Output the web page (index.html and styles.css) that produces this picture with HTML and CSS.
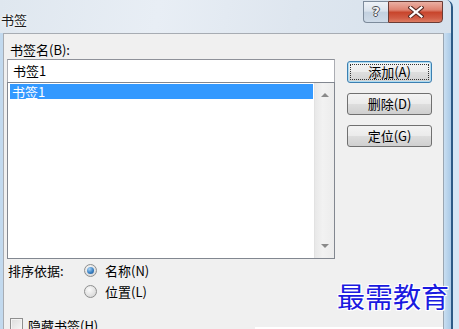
FILE: index.html
```html
<!DOCTYPE html>
<html lang="zh-CN">
<head>
<meta charset="utf-8">
<title>书签</title>
<link rel="stylesheet" href="styles.css">
</head>
<body>
<div class="window">
  <div class="titlebar">
    <span class="title">书签</span>
    <div class="caption-btns">
      <div class="cap help"><span class="qmark">?</span></div>
      <div class="cap close">
        <svg width="16" height="12" viewBox="0 0 16 12">
          <path d="M2.5 1.5 L13.5 10.5 M13.5 1.5 L2.5 10.5" stroke="#5a2b24" stroke-width="4.2" stroke-linecap="square"/>
          <path d="M2.5 1.5 L13.5 10.5 M13.5 1.5 L2.5 10.5" stroke="#ffffff" stroke-width="2.2" stroke-linecap="square"/>
        </svg>
      </div>
    </div>
  </div>
  <div class="frame">
    <div class="client">
      <div class="main">
        <div class="leftcol">
          <div class="label">书签名(B):</div>
          <div class="input">书签1</div>
          <div class="list">
            <div class="items">
              <div class="item sel">书签1</div>
            </div>
            <div class="vscroll">
              <div class="arrow up"></div>
              <div class="arrow down"></div>
            </div>
          </div>
        </div>
        <div class="btncol">
          <div class="btn default"><span class="focus">添加(A)</span></div>
          <div class="btn">删除(D)</div>
          <div class="btn">定位(G)</div>
        </div>
      </div>
      <div class="sort">
        <div class="sort-label">排序依据:</div>
        <div class="radios">
          <div class="radio-row"><span class="radio checked"></span><span>名称(N)</span></div>
          <div class="radio-row"><span class="radio"></span><span>位置(L)</span></div>
        </div>
      </div>
      <div class="check-row">
        <span class="checkbox"></span><span class="check-text">隐藏书签(H)</span>
        <div class="strip"></div>
      </div>
    </div>
    <div class="frame-right"></div>
  </div>
</div>
<div class="watermark">最需教育</div>
</body>
</html>
```
FILE: styles.css
```css
* { box-sizing: border-box; }
html, body { margin: 0; padding: 0; }
body {
  position: relative;
  width: 459px;
  height: 329px;
  overflow: hidden;
  background: #d6e6f4;
  font-family: "Noto Sans CJK SC", "Noto Sans", sans-serif;
  font-size: 13px;
  color: #000;
}
.window {
  width: 453px;
  height: 329px;
  border-right: 2px solid #2b5a86;
  border-top-right-radius: 7px;
  background: #c2d9ee;
  display: flex;
  flex-direction: column;
  overflow: hidden;
}
.titlebar {
  height: 33px;
  flex: none;
  display: flex;
  align-items: flex-start;
  padding-right: 8px;
  background: linear-gradient(100deg, #dfe7ef 0%, #e8eef5 35%, #dee6ef 65%, #d6e1ec 100%);
}
.title {
  padding-left: 1px;
  margin-top: 11px;
  line-height: 17px;
  font-size: 13px;
  color: #1b1b1b;
  text-shadow: 0 0 6px #fff, 0 0 3px #fff;
}
.caption-btns {
  margin-left: auto;
  margin-top: 1px;
  display: flex;
}
.cap {
  height: 22px;
  display: flex;
  align-items: center;
  justify-content: center;
}
.help {
  width: 25px;
  border: 1px solid #7d8b9b;
  border-right: none;
  border-bottom-left-radius: 4px;
  background: linear-gradient(#eef2f7 0%, #dae3ed 45%, #c3d1e0 52%, #cfdbe8 100%);
}
.qmark {
  font-family: "DejaVu Sans", sans-serif;
  font-weight: bold;
  font-size: 13px;
  line-height: 14px;
  color: #f4f4f4;
  text-shadow: 1px 0 0 #4b4f55, -1px 0 0 #4b4f55, 0 1px 0 #4b4f55, 0 -1px 0 #4b4f55;
}
.close {
  width: 55px;
  border: 1px solid #6a3b34;
  border-bottom-right-radius: 4px;
  background: linear-gradient(#eab0a4 0%, #de8270 40%, #c8452c 52%, #d15c45 80%, #dd7d63 100%);
}
.frame {
  flex: 1;
  display: flex;
  min-height: 0;
}
.client {
  margin-left: 3px;
  width: 441px;
  background: #f0f0f0;
  border-left: 1px solid #a7acb3;
  border-top: 1px solid #a7acb3;
  border-right: 1px solid #9aa6b2;
  padding: 7px 0 0 3px;
  display: flex;
  flex-direction: column;
}
.frame-right {
  flex: 1;
  background: linear-gradient(to right, #c9def1, #a9c9e6);
}
.main { display: flex; }
.leftcol { width: 328px; }
.label {
  height: 18px;
  line-height: 18px;
  padding-left: 3px;
}
.input {
  height: 23px;
  background: #fff;
  border: 1px solid #abadb3;
  border-top-color: #8e9199;
  border-bottom: none;
  padding-left: 5px;
  line-height: 21px;
}
.list {
  height: 177px;
  border: 1px solid #828790;
  background: #fff;
  display: flex;
}
.items {
  flex: 1;
  padding-top: 1px;
}
.item {
  height: 15px;
  line-height: 15px;
  margin: 0 1px 0 2px;
  padding-left: 2px;
}
.item.sel {
  background: #3399ff;
  color: #fff;
}
.vscroll {
  width: 20px;
  background: linear-gradient(to right, #e8e8e8, #f2f2f2 40%, #ececec);
  border-left: 1px solid #e2e2e2;
  display: flex;
  flex-direction: column;
  justify-content: space-between;
}
.arrow {
  height: 24px;
  display: flex;
  align-items: center;
  justify-content: center;
}
.arrow::before {
  content: "";
  width: 0;
  height: 0;
  border-left: 4px solid transparent;
  border-right: 4px solid transparent;
}
.arrow.up::before { border-bottom: 4px solid #8a8a8a; }
.arrow.down::before { border-top: 4px solid #8a8a8a; }
.btncol {
  margin-left: 12px;
  width: 85px;
  padding-top: 20px;
  display: flex;
  flex-direction: column;
  gap: 10px;
}
.btn {
  height: 22px;
  border: 1px solid #707070;
  border-radius: 3px;
  background: linear-gradient(#f3f3f3 0%, #ebebeb 48%, #dddddd 52%, #cfcfcf 100%);
  display: flex;
  align-items: center;
  justify-content: center;
  line-height: 18px;
}
.btn.default {
  border-color: #3c7fb1;
  padding: 2px;
  box-shadow: inset 0 0 0 1px #aedcf2;
  background: linear-gradient(#f4f4f4 0%, #ececec 48%, #dedede 52%, #d2d2d2 100%);
}
.focus {
  flex: 1;
  align-self: stretch;
  border: 1px dotted #333;
  display: flex;
  align-items: center;
  justify-content: center;
}
.sort {
  display: flex;
  margin-top: 1px;
}
.sort-label {
  width: 77px;
  padding-left: 1px;
  line-height: 21px;
}
.radios {
  display: flex;
  flex-direction: column;
}
.radio-row {
  height: 21px;
  display: flex;
  align-items: center;
  gap: 8px;
}
.radio {
  position: relative;
  width: 13px;
  height: 13px;
  border-radius: 50%;
  border: 1px solid #8e8f8f;
  background: radial-gradient(circle at 40% 35%, #fbfbfb, #dcdcdc 70%, #cfcfcf);
}
.radio.checked::after {
  content: "";
  position: absolute;
  left: 2px;
  top: 2px;
  width: 7px;
  height: 7px;
  border-radius: 50%;
  background: radial-gradient(circle at 35% 30%, #a9d4f7, #3b82c4 55%, #1d4f86);
}
.check-row {
  margin-top: 16px;
  display: flex;
  align-items: flex-start;
  padding-left: 3px;
}
.checkbox {
  width: 13px;
  height: 13px;
  border: 1px solid #8f8f8f;
  background: linear-gradient(135deg, #dcdcdc, #f7f7f7);
  box-shadow: inset 0 0 0 1px #f4f4f4;
}
.check-text {
  margin-left: 5px;
  line-height: 15px;
}
.strip {
  margin-left: auto;
  margin-top: 9px;
  width: 188px;
  height: 6px;
  background: #fff;
}
.watermark {
  position: absolute;
  left: 337px;
  top: 280px;
  white-space: nowrap;
  font-size: 28px;
  line-height: 32px;
  color: #1a1ae0;
  text-shadow: 1px 1px 0 #fff, -1px -1px 0 #fff, 1px -1px 0 #fff, -1px 1px 0 #fff, 0 0 3px #fff;
}
```
